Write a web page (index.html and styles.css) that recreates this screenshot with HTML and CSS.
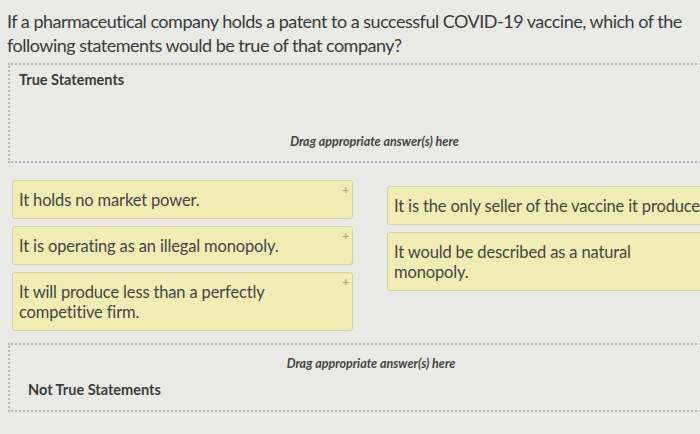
FILE: index.html
```html
<!DOCTYPE html>
<html lang="en">
<head>
    <meta charset="UTF-8">
    <title>True / Not True</title>
    <link rel="stylesheet" href="styles.css">
</head>
<body>
<div class="page">
    <p class="question">If a pharmaceutical company holds a patent to a successful COVID-19 vaccine, which of the following statements would be true of that company?</p>

    <!-- drop zone: true -->
    <div class="zone zone-true">
        <div class="zone-label">True Statements</div>
        <div class="zone-hint">Drag appropriate answer(s) here</div>
    </div>

    <!-- answer cards -->
    <div class="cards">
        <div class="col">
            <div class="card">It holds no market power.<span class="grip">+</span></div>
            <div class="card">It is operating as an illegal monopoly.<span class="grip">+</span></div>
            <div class="card">It will produce less than a perfectly competitive firm.<span class="grip">+</span></div>
        </div>
        <div class="col col-right">
            <div class="card">It is the only seller of the vaccine it produces.<span class="grip">+</span></div>
            <div class="card">It would be described as a natural monopoly.<span class="grip">+</span></div>
        </div>
    </div>

    <!-- drop zone: not true -->
    <div class="zone zone-false">
        <div class="zone-hint">Drag appropriate answer(s) here</div>
        <div class="zone-label">Not True Statements</div>
    </div>
</div>
</body>
</html>
```

FILE: styles.css
```css
* {
    padding: 0;
    margin: 0;
    box-sizing: border-box;
}

body {
    background-color: #e9e9e5;
    font-family: Lato, "Noto Sans", sans-serif;
    color: #3a3a3a;
    overflow: hidden;
}

.page {
    width: 760px;
    padding: 9px 0 0 7px;
}

.question {
    font-size: 18px;
    line-height: 24px;
    letter-spacing: -0.5px;
    width: 690px;
}

.zone {
    display: flex;
    flex-direction: column;
    width: 732px;
    margin: 6px 0 0 1px;
    border: 2px dotted #b2b2c8;
    border-right: none;
}

.zone-true {
    height: 100px;
    padding: 6px 0 0 9px;
}

.zone-false {
    height: 69px;
    margin-top: 12px;
    padding: 11px 0 0 18px;
}

.zone-label {
    font-size: 14.5px;
    font-weight: 700;
    color: #3c3c3c;
}

.zone-hint {
    font-size: 12.5px;
    font-weight: 700;
    font-style: italic;
    color: #444;
    text-align: center;
    padding-right: 10px;
}

.zone-true .zone-hint {
    margin-top: 46px;
}

.zone-false .zone-hint {
    padding-right: 26px;
}

.zone-false .zone-label {
    margin-top: 10px;
}

.cards {
    display: flex;
    gap: 34px;
    margin: 17px 0 0 5px;
}

.col {
    flex: none;
    display: flex;
    flex-direction: column;
    gap: 7px;
    width: 341px;
}

.col-right {
    padding-top: 6px;
    width: 360px;
}

.card {
    position: relative;
    background-color: #efedb3;
    border: 1px solid #d5d29f;
    border-radius: 3px;
    padding: 9px 30px 8px 6px;
    font-size: 16.5px;
    line-height: 20px;
    letter-spacing: -0.15px;
    color: #454545;
}

.col-right .card {
    white-space: nowrap;
}

.col-right .card:nth-child(2) {
    white-space: normal;
    padding-right: 100px;
}

.grip {
    position: absolute;
    top: 3px;
    right: 3px;
    font-size: 12px;
    line-height: 1;
    font-weight: 700;
    color: #aaa67c;
}
```
